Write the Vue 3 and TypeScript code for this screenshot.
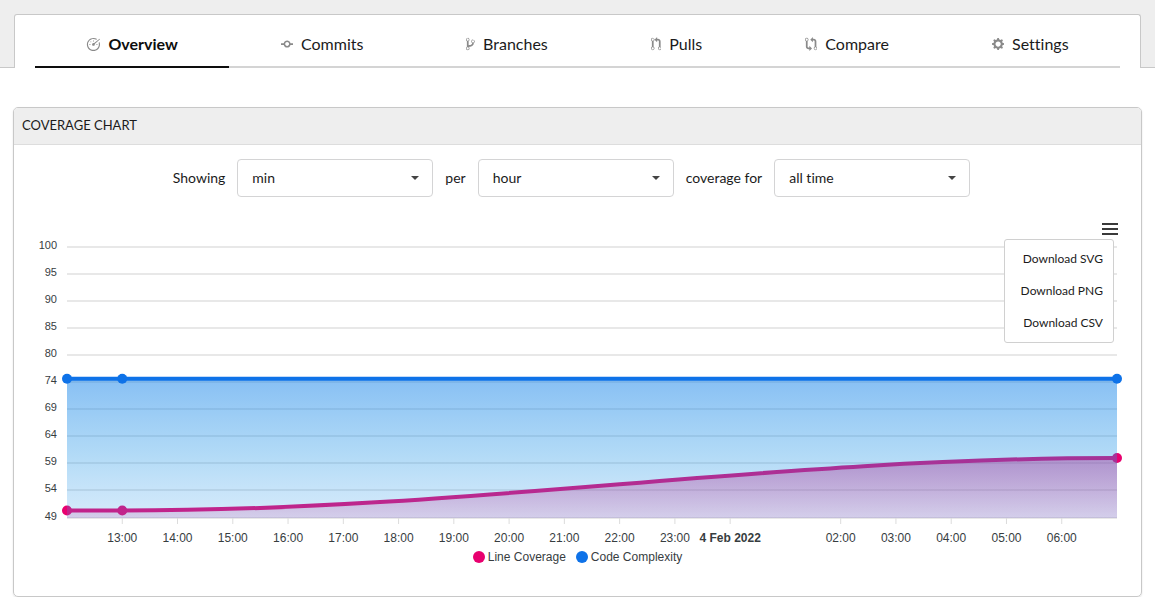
<script setup lang="ts">
import { computed, onBeforeUnmount, onMounted, ref } from 'vue'

interface Tab {
  label: string
  width: number
  path: string
}

const tabs: Tab[] = [
  {
    label: 'Overview',
    width: 16,
    path: 'M9 5H8V4h1v1zm4 3h-1v1h1V8zM6 5H5v1h1V5zM5 8H4v1h1V8zm11-5.5l-.5-.5L9 7c-.06-.02-1 0-1 0-.55 0-1 .45-1 1v1c0 .55.45 1 1 1h1c.55 0 1-.45 1-1v-.92l6-5.58zm-1.59 4.09c.19.61.3 1.25.3 1.91 0 3.42-2.78 6.2-6.2 6.2-3.42 0-6.21-2.78-6.21-6.2 0-3.42 2.78-6.2 6.2-6.2 1.2 0 2.31.34 3.27.94l.94-.94A7.459 7.459 0 0 0 8.51 1C4.36 1 1 4.36 1 8.5 1 12.64 4.36 16 8.5 16c4.14 0 7.5-3.36 7.5-7.5 0-1.03-.2-2.02-.59-2.91l-1 1z',
  },
  {
    label: 'Commits',
    width: 14,
    path: 'M10.86 7c-.45-1.72-2-3-3.86-3-1.86 0-3.41 1.28-3.86 3H0v2h3.14c.45 1.72 2 3 3.86 3 1.86 0 3.41-1.28 3.86-3H14V7h-3.14zM7 10.2c-1.22 0-2.2-.98-2.2-2.2 0-1.22.98-2.2 2.2-2.2 1.22 0 2.2.98 2.2 2.2 0 1.22-.98 2.2-2.2 2.2z',
  },
  {
    label: 'Branches',
    width: 10,
    path: 'M10 5c0-1.11-.89-2-2-2a1.993 1.993 0 0 0-1 3.72v.3c-.02.52-.23.98-.63 1.38-.4.4-.86.61-1.38.63-.83.02-1.48.16-2 .45V4.72a1.993 1.993 0 0 0-1-3.72C.88 1 0 1.89 0 3a2 2 0 0 0 1 1.72v6.56c-.59.35-1 .99-1 1.72 0 1.11.89 2 2 2 1.11 0 2-.89 2-2 0-.53-.2-1-.53-1.36.09-.06.48-.41.59-.47.25-.11.56-.17.94-.17 1.05-.05 1.95-.45 2.75-1.25S8.95 7.77 9 6.73h-.02C9.59 6.37 10 5.73 10 5zM2 1.8c.66 0 1.2.55 1.2 1.2 0 .65-.55 1.2-1.2 1.2C1.35 4.2.8 3.65.8 3c0-.65.55-1.2 1.2-1.2zm0 12.41c-.66 0-1.2-.55-1.2-1.2 0-.65.55-1.2 1.2-1.2.65 0 1.2.55 1.2 1.2 0 .65-.55 1.2-1.2 1.2zm6-8c-.66 0-1.2-.55-1.2-1.2 0-.65.55-1.2 1.2-1.2.65 0 1.2.55 1.2 1.2 0 .65-.55 1.2-1.2 1.2z',
  },
  {
    label: 'Pulls',
    width: 12,
    path: 'M11 11.28V5c-.03-.78-.34-1.47-.94-2.06C9.46 2.35 8.78 2.03 8 2H7V0L4 3l3 3V4h1c.27.02.48.11.69.31.21.2.3.42.31.69v6.28A1.993 1.993 0 0 0 10 15a1.993 1.993 0 0 0 1-3.72zm-1 2.92c-.66 0-1.2-.55-1.2-1.2 0-.65.55-1.2 1.2-1.2.65 0 1.2.55 1.2 1.2 0 .65-.55 1.2-1.2 1.2zM4 3c0-1.11-.89-2-2-2a1.993 1.993 0 0 0-1 3.72v6.56A1.993 1.993 0 0 0 2 15a1.993 1.993 0 0 0 1-3.72V4.72c.59-.34 1-.98 1-1.72zm-.8 10c0 .66-.55 1.2-1.2 1.2-.65 0-1.2-.55-1.2-1.2 0-.65.55-1.2 1.2-1.2.65 0 1.2.55 1.2 1.2zM2 4.2C1.34 4.2.8 3.65.8 3c0-.65.55-1.2 1.2-1.2.65 0 1.2.55 1.2 1.2 0 .65-.55 1.2-1.2 1.2z',
  },
  {
    label: 'Compare',
    width: 14,
    path: 'M5 12H4c-.27-.02-.48-.11-.69-.31-.21-.2-.3-.42-.31-.69V4.72A1.993 1.993 0 0 0 2 1a1.993 1.993 0 0 0-1 3.72V11c.03.78.34 1.47.94 2.06.6.59 1.28.91 2.06.94h1v2l3-3-3-3v2zM2 1.8c.66 0 1.2.55 1.2 1.2 0 .65-.55 1.2-1.2 1.2C1.35 4.2.8 3.65.8 3c0-.65.55-1.2 1.2-1.2zm11 9.48V5c-.03-.78-.34-1.47-.94-2.06-.6-.59-1.28-.91-2.06-.94H9V0L6 3l3 3V4h1c.27.02.48.11.69.31.21.2.3.42.31.69v6.28A1.993 1.993 0 0 0 12 15a1.993 1.993 0 0 0 1-3.72zm-1 2.92c-.66 0-1.2-.55-1.2-1.2 0-.65.55-1.2 1.2-1.2.65 0 1.2.55 1.2 1.2 0 .65-.55 1.2-1.2 1.2z',
  },
  {
    label: 'Settings',
    width: 14,
    path: 'M14 8.77v-1.6l-1.94-.64-.45-1.09.88-1.84-1.13-1.13-1.81.91-1.09-.45-.69-1.92h-1.6l-.63 1.94-1.11.45-1.84-.88-1.13 1.13.91 1.81-.45 1.09L0 7.23v1.59l1.94.64.45 1.09-.88 1.84 1.13 1.13 1.81-.91 1.09.45.69 1.92h1.59l.63-1.94 1.11-.45 1.84.88 1.13-1.13-.92-1.81.47-1.09L14 8.75v.02zM7 11c-1.66 0-3-1.34-3-3s1.34-3 3-3 3 1.34 3 3-1.34 3-3 3z',
  },
]
const activeTab = ref('Overview')

const filters = [
  { id: 'aggregate', label: 'Showing', options: ['min', 'max', 'average'] },
  { id: 'interval', label: 'per', options: ['hour', 'day', 'week', 'month'] },
  { id: 'range', label: 'coverage for', options: ['all time', 'last month', 'last week'] },
]
const selected = ref<Record<string, string>>({ aggregate: 'min', interval: 'hour', range: 'all time' })

const menuOpen = ref(true)
const downloads = ['Download SVG', 'Download PNG', 'Download CSV']

// Chart geometry: the plot stretches with its container, the height is fixed.
const chart = ref<HTMLElement | null>(null)
const chartWidth = ref(1127)
let observer: ResizeObserver | undefined
onMounted(() => {
  if (!chart.value) return
  chartWidth.value = chart.value.clientWidth
  observer = new ResizeObserver(() => {
    if (chart.value) chartWidth.value = chart.value.clientWidth
  })
  observer.observe(chart.value)
})
onBeforeUnmount(() => observer?.disconnect())

const left = 53
const top = 35
const plotHeight = 271
const bottom = top + plotHeight
const right = computed(() => chartWidth.value - 24)
const maxValue = 100
const minValue = 49
const startHour = 12
const hours = 19

const yOf = (v: number) => top + ((maxValue - v) / (maxValue - minValue)) * plotHeight
const xOf = (h: number) => left + ((h - startHour) / hours) * (right.value - left)

const yTicks = [100, 95, 90, 85, 80, 74, 69, 64, 59, 54, 49].map((label, i) => ({
  label,
  y: Math.floor(top + (i * plotHeight) / 10),
}))

const xTicks = computed(() =>
  Array.from({ length: 18 }, (_, i) => startHour + 1 + i)
    .filter((h) => h !== 25)
    .map((h) => ({
      x: xOf(h),
      bold: h === 24,
      label: h === 24 ? '4 Feb 2022' : `${String(h % 24).padStart(2, '0')}:00`,
    })),
)

interface Sample {
  hour: number
  value: number
}
const lineCoverage: Sample[] = [
  { hour: 12, value: 50.4 },
  { hour: 13, value: 50.4 },
  { hour: 31, value: 60.3 },
]
const codeComplexity: Sample[] = [
  { hour: 12, value: 75.2 },
  { hour: 13, value: 75.2 },
  { hour: 31, value: 75.2 },
]

function shape(samples: Sample[]) {
  const points = samples.map((s) => ({ x: xOf(s.hour), y: yOf(s.value) }))
  let line = `M${points[0].x} ${points[0].y}`
  for (let i = 1; i < points.length; i++) {
    const a = points[i - 1]
    const b = points[i]
    const pull = (b.x - a.x) * 0.35
    line += `C${a.x + pull} ${a.y} ${b.x - pull} ${b.y} ${b.x} ${b.y}`
  }
  const area = `${line}L${right.value} ${bottom}L${left} ${bottom}Z`
  return { points, line, area }
}

const series = computed(() => [
  { name: 'Line Coverage', key: 'coverage', ...shape(lineCoverage) },
  { name: 'Code Complexity', key: 'complexity', ...shape(codeComplexity) },
])
</script>

<template>
  <div class="page">
    <header class="top-strip">
      <nav class="tab-panel" aria-label="Repository">
        <div class="tabs">
          <a
            v-for="tab in tabs"
            :key="tab.label"
            href="#"
            class="tab"
            :class="{ active: tab.label === activeTab }"
            @click.prevent="activeTab = tab.label"
          >
            <svg class="tab-icon" :viewBox="`0 0 ${tab.width} 16`" aria-hidden="true">
              <path fill-rule="evenodd" :d="tab.path" />
            </svg>
            <span>{{ tab.label }}</span>
          </a>
        </div>
      </nav>
    </header>

    <main class="card">
      <h2 class="card-title">COVERAGE CHART</h2>

      <div class="filters">
        <template v-for="filter in filters" :key="filter.id">
          <label :for="filter.id">{{ filter.label }}</label>
          <div class="select-box">
            <select :id="filter.id" v-model="selected[filter.id]">
              <option v-for="option in filter.options" :key="option">{{ option }}</option>
            </select>
            <svg class="caret" viewBox="0 0 8 4" aria-hidden="true"><path d="M0 0h8L4 4z" /></svg>
          </div>
        </template>
      </div>

      <div ref="chart" class="chart">
        <svg class="plot" :width="chartWidth" height="334" role="img" aria-label="Coverage over time">
          <defs>
            <linearGradient id="coverage-fill" x1="0" y1="0" x2="0" y2="1">
              <stop offset="0" stop-color="#eb006e" stop-opacity="0.43" />
              <stop offset="1" stop-color="#eb006e" stop-opacity="0.14" />
            </linearGradient>
            <linearGradient id="complexity-fill" x1="0" y1="0" x2="0" y2="1">
              <stop offset="0" stop-color="#1482e9" stop-opacity="0.51" />
              <stop offset="0.57" stop-color="#2296e7" stop-opacity="0.34" />
              <stop offset="1" stop-color="#3c9feb" stop-opacity="0.21" />
            </linearGradient>
          </defs>

          <g v-for="tick in yTicks" :key="tick.label">
            <line class="grid" :x1="left" :x2="right" :y1="tick.y" :y2="tick.y" />
            <text class="y-label" :x="left - 10" :y="tick.y + 2">{{ tick.label }}</text>
          </g>
          <g v-for="tick in xTicks" :key="tick.label">
            <line class="tick" :x1="tick.x" :x2="tick.x" :y1="bottom" :y2="bottom + 6" />
            <text class="x-label" :class="{ bold: tick.bold }" :x="tick.x" :y="bottom + 24">{{ tick.label }}</text>
          </g>

          <g v-for="item in series" :key="item.key" :class="item.key">
            <path class="area" :d="item.area" />
            <path class="stroke" :d="item.line" />
            <circle v-for="point in item.points" :key="point.x" :cx="point.x" :cy="point.y" r="5" />
          </g>
        </svg>

        <ul class="legend">
          <li v-for="item in series" :key="item.key">
            <span class="dot" :class="item.key"></span>{{ item.name }}
          </li>
        </ul>

        <button class="menu-button" type="button" aria-label="Chart menu" @click="menuOpen = !menuOpen">
          <svg viewBox="0 0 16 12" aria-hidden="true"><path d="M0 0h16v2H0zM0 5h16v2H0zM0 10h16v2H0z" /></svg>
        </button>
        <div v-if="menuOpen" class="menu">
          <button v-for="item in downloads" :key="item" type="button">{{ item }}</button>
        </div>
      </div>
    </main>
  </div>
</template>

<style>
body {
  margin: 0;
  background: #fff;
}
</style>

<style scoped>
.page {
  font-family: Lato, "Liberation Sans", sans-serif;
  font-size: 14px;
  font-variant-ligatures: none;
  color: #1b1b1b;
}

.top-strip {
  padding: 14px 14px 0;
  background: #eee;
  box-shadow: inset 0 -1px #c8c8c8;
}

.tab-panel {
  padding: 0 20px;
  background: #fff;
  border: 1px solid #c8c8c8;
  border-bottom: 0;
  border-radius: 3px 3px 0 0;
}

.tabs {
  display: flex;
}

.tab {
  flex: 1 1 auto;
  display: flex;
  align-items: center;
  justify-content: center;
  gap: 8px;
  box-sizing: border-box;
  height: 53px;
  padding-top: 6px;
  border-bottom: 2px solid #d4d4d4;
  color: #1b1b1b;
  font-size: 16px;
  line-height: 20px;
  text-decoration: none;
}

.tab.active {
  border-color: #0e0e0e;
  color: #0e0e0e;
  font-weight: 700;
}

.tab-icon {
  height: 14px;
  fill: #8a8a8a;
}

.card {
  margin: 39px 13px 0;
  border: 1px solid #c8c8c8;
  border-radius: 5px;
  box-shadow: 0 1px 2px rgba(0, 0, 0, 0.12);
}

.card-title {
  margin: 0;
  padding: 7px 8px 9px;
  border-bottom: 1px solid #ddd;
  border-radius: 4px 4px 0 0;
  background: #eee;
  font-size: 13px;
  font-weight: 400;
  line-height: 20px;
}

.filters {
  display: flex;
  align-items: center;
  justify-content: center;
  gap: 12px;
  padding: 14px 12px 15px 0;
}

.filters label {
  padding-bottom: 2px;
}

.select-box {
  display: grid;
  align-items: center;
  width: 196px;
}

.select-box > * {
  grid-area: 1 / 1;
}

select {
  width: 100%;
  height: 38px;
  padding: 0 32px 2px 14px;
  border: 1px solid #d4d4d5;
  border-radius: 4px;
  background: #fff;
  color: #1b1b1b;
  font: inherit;
  font-variant-ligatures: none;
  appearance: none;
}

.caret {
  justify-self: end;
  width: 8px;
  height: 4px;
  margin-right: 14px;
  fill: #444;
  pointer-events: none;
}

.chart {
  position: relative;
  padding-bottom: 28px;
  font-family: "Liberation Sans", Helvetica, Arial, sans-serif;
}

.plot {
  display: block;
}

.grid {
  stroke: #e8e8e8;
  stroke-width: 2;
}

.tick {
  stroke: #dcdcdc;
}

.y-label {
  fill: #373d3f;
  font-size: 11px;
  text-anchor: end;
}

.x-label {
  fill: #373d3f;
  font-size: 12px;
  text-anchor: middle;
}

.x-label.bold {
  font-weight: 700;
}

.stroke {
  fill: none;
  stroke-width: 4;
}

.coverage .area {
  fill: url(#coverage-fill);
}

.coverage .stroke {
  stroke: #e8006f;
}

.coverage circle {
  fill: #e8006f;
}

.complexity .area {
  fill: url(#complexity-fill);
}

.complexity .stroke {
  stroke: #0e72e8;
}

.complexity circle {
  fill: #0e72e8;
}

.legend {
  display: flex;
  justify-content: center;
  gap: 10px;
  margin: 0;
  padding: 4px 0;
  list-style: none;
  color: #373d3f;
  font-size: 12px;
  line-height: 14px;
}

.legend li {
  display: flex;
  align-items: center;
  gap: 3px;
}

.dot {
  width: 12px;
  height: 12px;
  border-radius: 50%;
}

.dot.coverage {
  background: #e8006f;
}

.dot.complexity {
  background: #0e72e8;
}

.menu-button {
  position: absolute;
  top: 7px;
  right: 19px;
  display: flex;
  align-items: center;
  justify-content: center;
  width: 24px;
  height: 20px;
  padding: 0;
  border: 0;
  background: none;
}

.menu-button svg {
  width: 16px;
  height: 12px;
  fill: #3a3a3a;
}

.menu {
  position: absolute;
  top: 27px;
  right: 27px;
  display: flex;
  flex-direction: column;
  box-sizing: border-box;
  width: 110px;
  padding: 3px 0;
  border: 1px solid #d0d0d0;
  border-radius: 3px;
  background: #fff;
}

.menu button {
  height: 32px;
  padding: 0 10px 2px;
  border: 0;
  background: none;
  color: #1b1b1b;
  font-family: Lato, "Liberation Sans", sans-serif;
  font-size: 12px;
  text-align: right;
}
</style>
